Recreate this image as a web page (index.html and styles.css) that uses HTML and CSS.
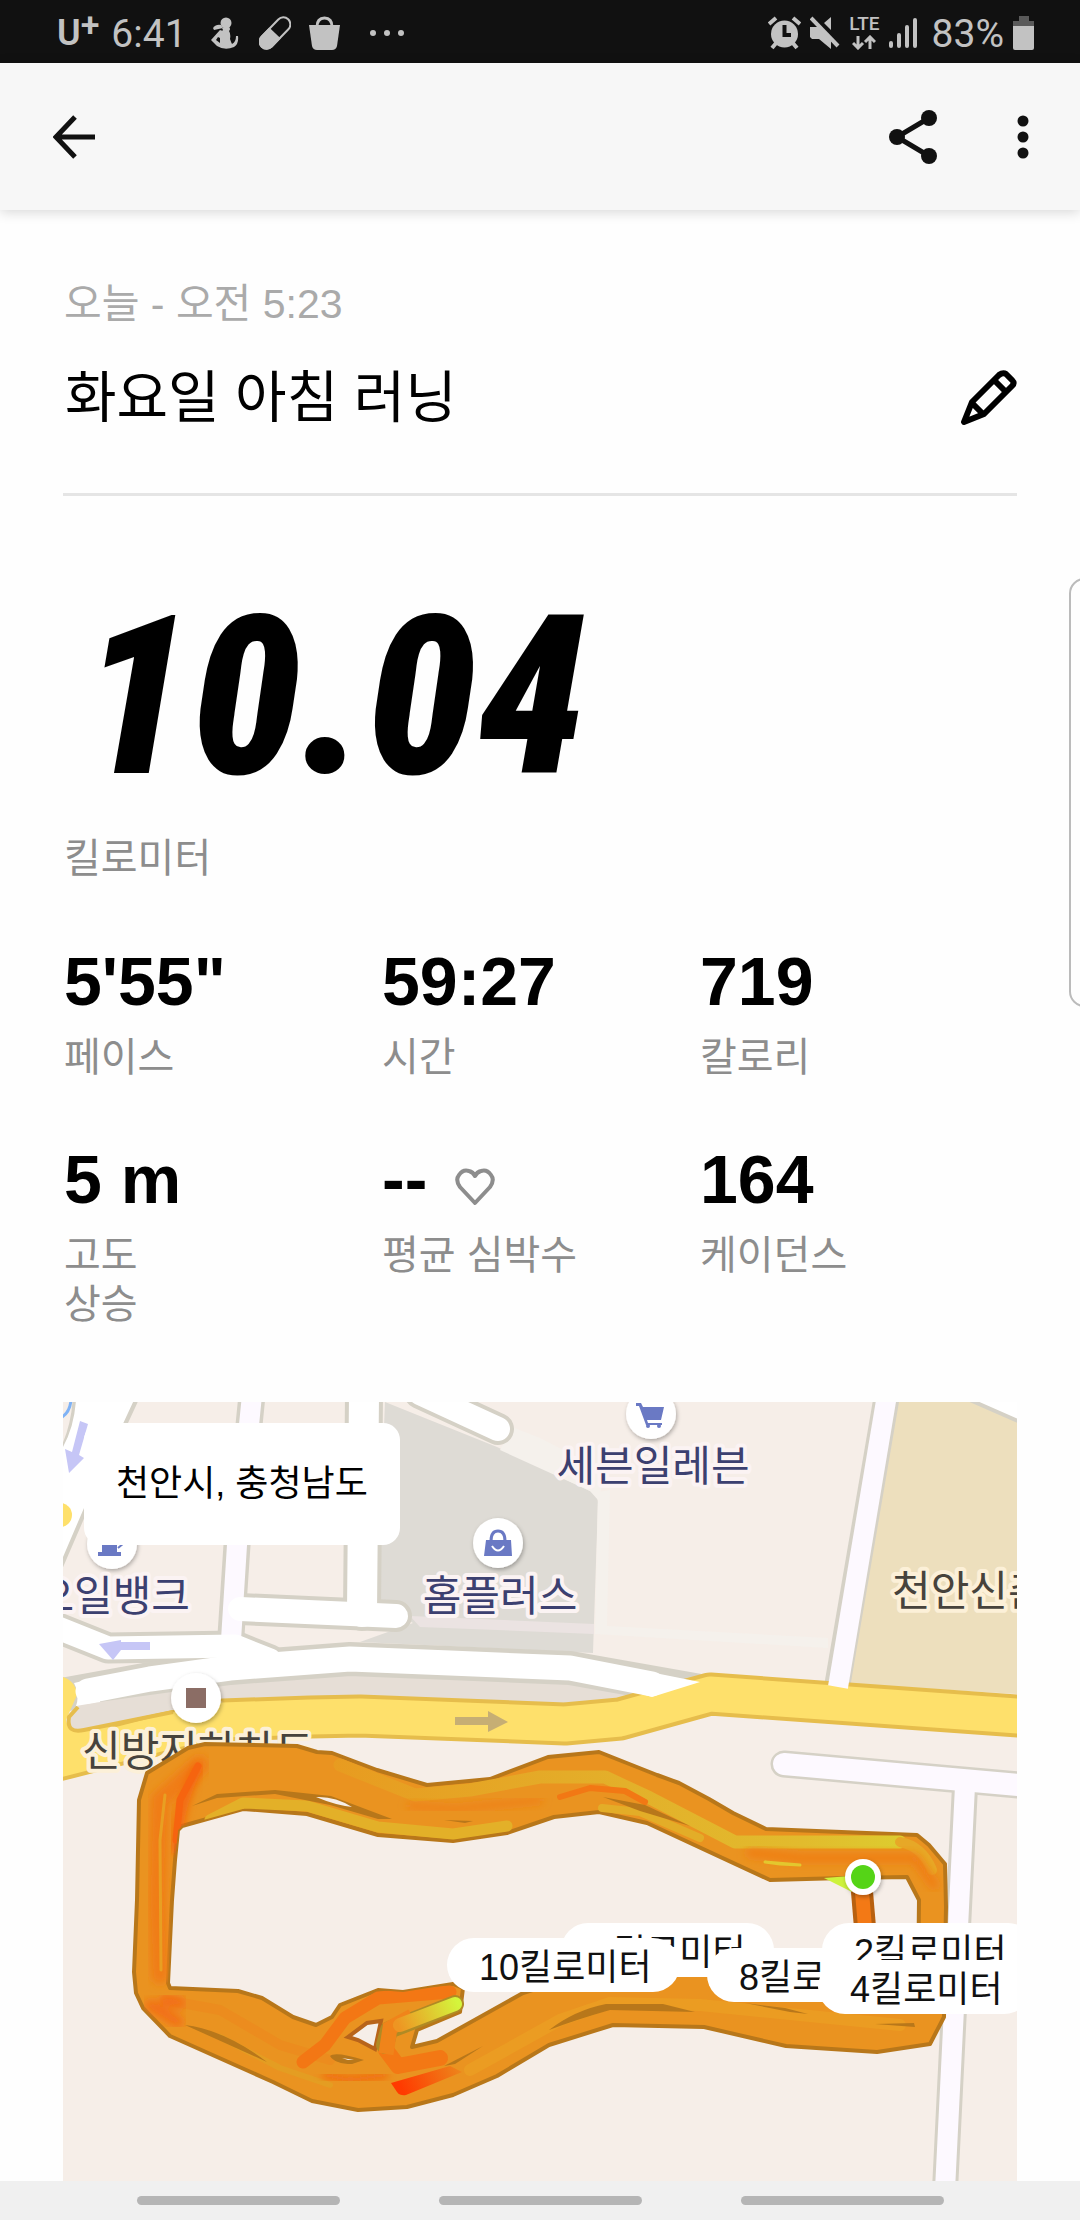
FILE: index.html
```html
<!DOCTYPE html>
<html lang="ko">
<head>
<meta charset="utf-8">
<meta name="viewport" content="width=device-width, initial-scale=1">
<title>화요일 아침 러닝</title>
<link rel="stylesheet" href="styles.css">
</head>
<body>
<div class="status">
  <div class="status-left">
    <span class="carrier">U<sup>+</sup></span>
    <span class="clock">6:41</span>
    <svg class="ic-run" width="28" height="34" viewBox="0 0 28 34" fill="#c2c2c2"><circle cx="15" cy="7" r="5.500"/><path d="M11 12L18 11Q20 13 18 15Q20 18 19 23Q20 26 21 28Q25 26 25 20L27 20Q28 28 23 31Q14 35 6 30L0 24L9 14Q12 15 12 14ZM7 21L5 24L9 27L9 22Z" fill-rule="evenodd"/><path d="M2 12Q5 8 10 9L12 12L3 14Z"/></svg>
    <svg class="ic-pill" width="32" height="34" viewBox="0 0 32 34"><g transform="rotate(-46 16 17)"><rect x="-3" y="10" width="38" height="14" rx="7" fill="none" stroke="#c2c2c2" stroke-width="2"/><path d="M16 9H4A8 8 0 0 0 4 25H16Z" fill="#c2c2c2"/></g></svg>
    <svg class="ic-bag" width="32" height="34" viewBox="0 0 32 34"><path d="M0 9H31L28 30Q27 34 23 34H8Q4 34 3 30Z" fill="#c2c2c2"/><path d="M8 11Q8 2 15.500 2Q23 2 23 11" fill="none" stroke="#c2c2c2" stroke-width="3"/></svg>
    <svg width="36" height="8" viewBox="0 0 36 8" fill="#c2c2c2"><circle cx="4" cy="4" r="3"/><circle cx="18" cy="4" r="3"/><circle cx="32" cy="4" r="3"/></svg>
  </div>
  <div class="status-right">
    <svg width="33" height="34" viewBox="0 0 33 34"><g stroke="#c2c2c2" stroke-width="4"><path d="M1 8L8 2M25 2L32 8M4 32L9 26M29 32L24 26"/></g><circle cx="16.500" cy="18" r="13.500" fill="#c2c2c2"/><path d="M16.500 9V19H23" fill="none" stroke="#111" stroke-width="4"/></svg>
    <svg width="30" height="34" viewBox="0 0 30 34" fill="#c2c2c2"><path d="M0 11H9L21 23V33L9 23H2L0 21ZM21 1V14L14 7Z"/><path d="M1 2L28 30" stroke="#c2c2c2" stroke-width="4"/></svg>
    <div class="lte"><span>LTE</span><svg width="24" height="15" viewBox="0 0 24 15" fill="none" stroke="#c2c2c2" stroke-width="3"><path d="M6 1V13M1 8L6 13L11 8M18 14V2M13 7L18 2L23 7"/></svg></div>
    <svg width="28" height="32" viewBox="0 0 28 32" stroke="#c2c2c2" stroke-width="4" stroke-linecap="round"><path d="M2 26V29M10 18V29M18 10V29M26 3V29"/></svg>
    <span class="percent">83%</span>
    <svg width="22" height="34" viewBox="0 0 22 34"><path d="M6 0H16V5H21V10H0V5H6Z" fill="#5a5a5a"/><path d="M0 10H21V32Q21 34 19 34H2Q0 34 0 32Z" fill="#c2c2c2"/></svg>
  </div>
</div>

<header class="appbar">
  <button class="icon-btn" aria-label="뒤로"><svg width="42" height="44" viewBox="0 0 42 44" fill="none" stroke="#111" stroke-width="5"><path d="M42 22H4M22 2L3 22L22 42"/></svg></button>
  <div class="actions">
    <button class="icon-btn" aria-label="공유"><svg width="48" height="54" viewBox="0 0 48 54"><path d="M40 8L8 27L40 46" fill="none" stroke="#111" stroke-width="5"/><g fill="#111"><circle cx="40" cy="8" r="8"/><circle cx="8" cy="27" r="8"/><circle cx="40" cy="46" r="8"/></g></svg></button>
    <button class="icon-btn" aria-label="더보기"><svg width="12" height="44" viewBox="0 0 12 44" fill="#111"><circle cx="6" cy="6" r="5.500"/><circle cx="6" cy="22" r="5.500"/><circle cx="6" cy="38" r="5.500"/></svg></button>
  </div>
</header>

<main class="run">
  <section class="heading">
    <p class="date">오늘 - 오전 5:23</p>
    <div class="title-row">
      <h1>화요일 아침 러닝</h1>
      <button class="icon-btn" aria-label="제목 편집"><svg width="56" height="56" viewBox="0 0 56 56" fill="none" stroke="#000" stroke-width="6" stroke-linejoin="round"><path d="M3 52L11 32L38 5Q42 2 45 4L51 10Q54 13 51 16L23 44Z"/><path d="M33 10L45 22M11 33L22 44"/></svg></button>
    </div>
  </section>

  <section class="distance">
    <p class="distance-value">10.04</p>
    <p class="label">킬로미터</p>
  </section>

  <section class="stats">
    <div class="stat"><p class="value">5'55"</p><p class="label">페이스</p></div>
    <div class="stat"><p class="value">59:27</p><p class="label">시간</p></div>
    <div class="stat"><p class="value">719</p><p class="label">칼로리</p></div>
    <div class="stat"><p class="value">5 m</p><p class="label">고도<br>상승</p></div>
    <div class="stat"><p class="value">-- <svg class="heart" width="40" height="38" viewBox="0 0 40 38" fill="none" stroke="#8d8d8d" stroke-width="4" stroke-linejoin="round"><path d="M20 35L5 19Q0 12 4 7Q8 1 14 3Q18 4 20 8Q22 4 26 3Q32 1 36 7Q40 12 35 19Z"/></svg></p><p class="label">평균 심박수</p></div>
    <div class="stat"><p class="value">164</p><p class="label">케이던스</p></div>
  </section>

  <section class="map">
    <svg class="map-art" viewBox="63 1402 954 779" preserveAspectRatio="xMinYMin slice">
      <defs>
        <filter id="soft" x="-20%" y="-20%" width="140%" height="140%"><feGaussianBlur stdDeviation="4"/></filter>
        <filter id="drop" x="-50%" y="-50%" width="200%" height="200%"><feDropShadow dx="1" dy="2" stdDeviation="2" flood-opacity=".3"/></filter>
        <linearGradient id="lime" gradientUnits="userSpaceOnUse" x1="400" y1="2030" x2="458" y2="2003"><stop offset="0" stop-color="#ee9522"/><stop offset="1" stop-color="#d4f53c"/></linearGradient>
        <linearGradient id="red" gradientUnits="userSpaceOnUse" x1="402" y1="2090" x2="470" y2="2062"><stop offset="0" stop-color="#ff3a00"/><stop offset="1" stop-color="#ea9320"/></linearGradient>
        <linearGradient id="amber" gradientUnits="userSpaceOnUse" x1="330" y1="0" x2="920" y2="0"><stop offset="0" stop-color="#e89b20"/><stop offset=".5" stop-color="#e3b02a"/><stop offset=".8" stop-color="#e2bb2d"/><stop offset="1" stop-color="#dccf2f"/></linearGradient>
        <clipPath id="band"><use href="#outer" clip-rule="evenodd"/></clipPath>
      </defs>
      <rect x="63" y="1402" width="954" height="779" fill="#f6eee8"/>

      <!-- blocks -->
      <path d="M385 1402L497 1447L590 1491Q598 1494 598 1502L593 1653L360 1642L413 1623L377 1603Z" fill="#dedbd5"/>
      <path d="M512 1427L540 1438L606 1472L598 1500L590 1491L500 1450Z" fill="#f5f1ec"/>
      <path d="M598 1492L610 1490L607 1626L828 1638V1648L595 1634Z" fill="#f5f1ec"/>
      <path d="M410 1616L594 1624V1634L420 1627Z" fill="#ebe3e2"/>
      <path d="M898 1402H1017V1694L848 1684Z" fill="#eddfbd"/>
      <path d="M970 1400L1020 1422V1400Z" fill="#fff" stroke="#d5d1c6" stroke-width="4"/>
      <path d="M77 1705L220 1682L353 1673L560 1682L640 1695L652 1700L573 1712L353 1702L223 1712L77 1735Q62 1730 70 1715Z" fill="#e6ded6"/>

      <!-- street casings -->
      <g fill="none" stroke="#d5d1c6" stroke-linejoin="round" stroke-linecap="round">
        <path d="M252 1395L237 1545L231 1635" stroke-width="27" stroke-linecap="butt"/>
        <path d="M364 1395L362 1612" stroke-width="38"/>
        <path d="M240 1609L396 1616" stroke-width="32"/>
        <path d="M420 1393L498 1429" stroke-width="32"/>
        <path d="M48 1624L108 1648L235 1646L270 1660" stroke-width="31"/>
        <path d="M62 1695L150 1679L230 1668L350 1659L450 1663L570 1668L700 1691" stroke-width="34"/>
        <path d="M887 1395L837 1687" stroke-width="26" stroke-linecap="butt"/>
        <path d="M784 1764L1030 1786" stroke-width="27"/>
        <path d="M965 1786L945 2190" stroke-width="26"/>
        <path d="M135 1402L85 1510L60 1568M75 1402Q73 1430 60 1455" stroke-width="5"/>
      </g>
      <path d="M76 1400H134L84 1508L60 1564V1452Q74 1430 76 1400Z" fill="#fff"/>

      <!-- main road -->
      <g fill="none" stroke-linejoin="round">
        <path d="M50 1762L175 1730L223 1720L310 1717L360 1716L565 1724L620 1719L710 1694L1030 1717" stroke="#e6bd4c" stroke-width="43"/>
        <path d="M50 1762L175 1730L223 1720L310 1717L360 1716L565 1724L620 1719L710 1694L1030 1717" stroke="#fee06b" stroke-width="35"/>
      </g>
      <path d="M60 1676Q76 1680 77 1695L66 1720Q68 1733 84 1730L110 1725L100 1760L60 1772Z" fill="#fee06b"/>
      <path d="M77 1705L69 1718Q66 1733 82 1730L173 1710L223 1702L172 1692Z" fill="#e6ded6"/>
      <path d="M78 1707L69 1717Q66 1734 84 1730L173 1712" fill="none" stroke="#e6bd4c" stroke-width="4"/>

      <g fill="none" stroke="#fff" stroke-linejoin="round" stroke-linecap="round">
        <path d="M252 1395L237 1545L231 1640" stroke="#fdf9ff" stroke-width="20"/>
        <path d="M364 1395L362 1612" stroke-width="30"/>
        <path d="M240 1609L396 1616" stroke-width="24"/>
        <path d="M420 1393L498 1429" stroke-width="24"/>
        <path d="M48 1624L108 1648L235 1646L270 1660" stroke-width="23"/>
        <path d="M88 1691L150 1679L230 1668L350 1659L450 1663L570 1668L652 1684" stroke-width="25"/>
        <path d="M887 1395L838 1687" stroke="#fdf9ff" stroke-width="20" stroke-linecap="butt"/>
        <path d="M784 1764L1030 1786" stroke="#fdf9ff" stroke-width="22"/>
        <path d="M965 1786L945 2190" stroke="#fdf9ff" stroke-width="20"/>
      </g>
      <path d="M640 1670L700 1682L652 1697L635 1692ZM100 1677L74 1683Q80 1695 76 1706L100 1702Z" fill="#fff"/>
      <circle cx="60" cy="1515" r="12" fill="#fee06b"/>
      <path d="M62 1417Q70 1412 71 1400" fill="none" stroke="#7fb2f5" stroke-width="3"/>

      <!-- direction arrows -->
      <path d="M80 1421L88 1424L79 1455L84 1458L69 1473L65 1449L72 1452Z" fill="#c6c6f6"/>
      <path d="M150 1642V1650H121L113 1660L99 1644L121 1640V1642Z" fill="#c6c6f6"/>
      <path d="M455 1717H488V1711L508 1722L488 1732V1725H455Z" fill="#c6ae74"/>

      <!-- places -->
      <g fill="#fff" filter="url(#drop)"><circle cx="651" cy="1414" r="25"/><circle cx="498" cy="1543" r="25"/><circle cx="112" cy="1544" r="25"/><circle cx="196" cy="1698" r="25"/></g>
      <g fill="#6a79c4">
        <path d="M636 1403H641L643 1407H664L661 1420H647L648 1423H662V1425H646L639 1406H636Z"/><circle cx="648" cy="1426" r="2"/><circle cx="659" cy="1426" r="2"/>
        <path d="M486 1540H511L512 1556H484Z"/><path d="M491 1541Q491 1531 498 1531Q505 1531 505 1541" fill="none" stroke="#6a79c4" stroke-width="3"/><path d="M492 1546Q498 1555 504 1546" fill="none" stroke="#fff" stroke-width="2"/>
        <path d="M102 1530H117V1552H121V1556H98V1552H102Z"/><path d="M118 1548L124 1543V1535" fill="none" stroke="#6a79c4" stroke-width="2"/>
      </g>
      <rect x="186" y="1688" width="20" height="20" fill="#8b6d65"/>
      <g class="place">
        <text x="653" y="1481" text-anchor="middle">세븐일레븐</text>
        <text x="500" y="1611" text-anchor="middle">홈플러스</text>
        <text x="190" y="1611" text-anchor="end">오일뱅크</text>
        <g class="place-dark"><text x="82" y="1766">신방지하차도</text><text x="892" y="1606">천안신촌</text></g>
      </g>

      <!-- run track -->
      <path id="outer" fill-rule="evenodd" fill="#ea9320" stroke="#b8771a" stroke-width="4" stroke-linejoin="round" d="M147 1773L188 1748L205 1744L297 1746L317 1752L332 1753L377 1770L427 1785L490 1779L548 1757L599 1752L657 1775L679 1783L709 1799L733 1813L766 1829L917 1835L929 1845L945 1864L946 1907L944 2017L930 2044L877 2052L786 2046L704 2027L613 2025L549 2045L497 2076L453 2095L407 2107L358 2110L312 2101L273 2082L170 2036L143 2008L136 1993L134 1972L137 1900L139 1800ZM182 1826L243 1809L307 1814L378 1835L453 1841L507 1833L554 1817L599 1812L647 1823L770 1880L843 1878L907 1877L919 1900L918 1990L800 1985L680 1970L580 1975L523 1993L437 2041L412 2047L417 2030L460 2012L463 1988L453 1984L403 1992L378 1990L340 2005L332 2017L316 2025L293 2017L262 1998L238 1991L170 1988L168 1983L172 1900L175 1860L178 1830Z"/>
      <g clip-path="url(#band)" fill="none" stroke-linejoin="round" stroke-linecap="round">
        <path d="M160 1975L157 1900L160 1800L200 1765" stroke="#f07d18" stroke-width="18" filter="url(#soft)"/>
        <path d="M340 1765L415 1795L470 1790L540 1777L605 1777L650 1798L735 1842L765 1842L900 1842" stroke="url(#amber)" stroke-width="13"/>
        <path d="M900 1842Q922 1846 932 1870" stroke="#e7a827" stroke-width="10"/>
        <path d="M210 1820L243 1803L307 1806L378 1827L453 1834L507 1826" stroke="#e3b028" stroke-width="11"/>
        <path d="M602 1808L640 1812L700 1838" stroke="#e3ad28" stroke-width="8"/>
        <path d="M161 1970L160 1840L165 1795" stroke="#e89f22" stroke-width="3"/>
        <path d="M176 1850Q180 1800 198 1768" stroke="#f6610d" stroke-width="9" filter="url(#soft)"/>
        <path d="M198 1766L180 1800L176 1840" stroke="#f6640f" stroke-width="7"/>
        <path d="M410 1806L455 1809L540 1800" stroke="#f07d16" stroke-width="6" filter="url(#soft)"/>
        <path d="M560 1797L590 1788L625 1791L645 1802" stroke="#f27814" stroke-width="6"/>
        <path d="M750 1853L800 1858L915 1858L934 1885" stroke="#f07d16" stroke-width="9" filter="url(#soft)"/>
        <path d="M930 1870V1920" stroke="#f07d16" stroke-width="10" filter="url(#soft)"/>
        <path d="M765 1862L800 1865L780 1864Z" stroke="#e3c72e" stroke-width="3"/>
        <path d="M165 2000L220 2010L280 2045L330 2060" stroke="#ec8c1e" stroke-width="10"/>
        <path d="M220 2037L280 2068L330 2085" stroke="#e49d22" stroke-width="6"/>
        <path d="M165 2000L180 2003M150 2005L178 2022" stroke="#f36d12" stroke-width="11" filter="url(#soft)"/>
        <path d="M470 2070L560 2020L610 2003L700 2005L900 2025" stroke="#eb9c22" stroke-width="12"/>
        <path d="M303 2062L325 2045L345 2018L378 1998L450 1992" stroke="#f37714" stroke-width="13"/>
        <path d="M325 2075L350 2080L385 2075" stroke="#f4600e" stroke-width="6" filter="url(#soft)"/>
        <path d="M386 2050L398 2066L440 2058" stroke="#f37814" stroke-width="16"/>
      </g>
      <g fill="#b8771a">
        <path d="M192 1806L217 1794L275 1790L331 1796L392 1819L378 1819L330 1805L275 1794L217 1798Z"/>
        <path d="M185 2025Q225 2030 267 2062L225 2043Z"/>
        <path d="M444 1820L473 1821L465 1823Z"/><path d="M603 1797L645 1805L690 1826L640 1811Z"/>
        <path d="M549 2030Q575 2010 606 2004H663L695 2012L610 2010Q575 2020 549 2030Z"/>
        <path d="M745 2003L785 2008L808 2014L790 2012Z"/><path d="M875 2024L914 2023L915 2027Z"/>
        <path d="M444 2066L483 2046L455 2064Z"/>
        <path d="M330 2056Q335 2051 364 2060L352 2064Q335 2064 330 2056Z"/>
      </g>
      <path d="M342 2058L354 2060L348 2060ZM316 1797Q335 1796 352 1807Q335 1805 316 1797Z" fill="#f6eee8"/>
      <path d="M348 2037L367 2023L381 2021L375 2049L358 2040Z" fill="#f6eee8" stroke="#b8641a" stroke-width="4"/>
      <path d="M385 2045L389 2030L455 2004" fill="none" stroke="#b08a24" stroke-width="18" stroke-linecap="round" stroke-linejoin="round"/>
      <path d="M386 2054L390 2028L412 2016" fill="none" stroke="#f0841a" stroke-width="15"/>
      <path d="M400 2025L455 2004" fill="none" stroke="url(#lime)" stroke-width="14" stroke-linecap="round"/>
      <path d="M391 2083L450 2066L462 2072L406 2095Q400 2096 397 2092Z" fill="url(#red)"/>
      <path d="M861 1880L869 1975" stroke="#b8600f" stroke-width="22"/><path d="M861 1880L869 1975" stroke="#f37915" stroke-width="14"/>
      <path d="M824 1878L850 1876L852 1892Z" fill="#cdf23c"/>
      <circle cx="863" cy="1877" r="18" fill="#fff" filter="url(#drop)"/><circle cx="863" cy="1877" r="12" fill="#55d417"/>
    </svg>
    <p class="location">천안시, 충청남도</p>
    <ul class="markers">
      <li class="chip km6">6킬로미터</li>
      <li class="chip km10">10킬로미터</li>
      <li class="chip km8">8킬로미터</li>
      <li class="chip km2">2킬로미터</li>
      <li class="chip km4">4킬로미터</li>
    </ul>
  </section>
</main>

<nav class="gestures"><span></span><span></span><span></span></nav>
<div class="edge-panel"></div>
</body>
</html>
```
FILE: styles.css
```css
* { box-sizing: border-box; }
body {
  margin: 0;
  min-height: 100vh;
  display: flex;
  flex-direction: column;
  position: relative;
  overflow-x: hidden;
  background: #fefefe;
  color: #000;
  font-family: "Liberation Sans", "Noto Sans CJK KR", sans-serif;
}
p, h1, ul { margin: 0; padding: 0; }
svg { display: block; flex: none; }
button { border: 0; padding: 0; background: none; cursor: pointer; }

.status {
  height: 63px;
  padding: 2px 45px 0 57px;
  display: flex;
  justify-content: space-between;
  background: #111;
  color: #c2c2c2;
  font-family: Roboto, sans-serif;
  font-size: 39px;
}
.status-left, .status-right { display: flex; align-items: center; }
.carrier { font-size: 36px; font-weight: 600; line-height: 40px; margin-right: 12px; }
.carrier sup { font-size: 34px; line-height: 20px; vertical-align: 9px; }
.clock, .percent { padding-top: 3px; }
.ic-run { margin-left: 24px; }
.ic-pill { margin-left: 20px; }
.ic-bag { margin: 0 28px 0 18px; }
.status-right { gap: 9px; }
.lte { display: flex; flex-direction: column; align-items: center; gap: 4px; font-size: 19px; line-height: 15px; font-weight: 500; }
.percent { margin-left: 6px; }

.appbar {
  height: 147px;
  padding: 0 51px 0 53px;
  display: flex;
  align-items: center;
  justify-content: space-between;
  background: #f7f7f7;
  box-shadow: 0 2px 12px rgba(0, 0, 0, .16);
}
.actions { display: flex; align-items: center; gap: 80px; }

.run { flex: 1; display: flex; flex-direction: column; padding: 68px 63px 0; }
.heading { border-bottom: 3px solid #e5e5e5; padding-bottom: 54px; }
.date { padding-left: 1px; font-size: 41px; line-height: 52px; color: #aaa; }
.title-row { display: flex; align-items: center; justify-content: space-between; margin-top: 26px; }
h1 { padding-left: 2px; font-size: 56px; line-height: 83px; font-weight: 400; }

.distance { padding-top: 90px; }
.distance-value {
  padding-left: 18px;
  font: italic 900 222px/222px "Roboto Condensed", Roboto, sans-serif;
}
.label { font-size: 40px; line-height: 49px; color: #8d8d8d; }
.distance .label { margin-top: 26px; padding-left: 1px; }

.stats { display: grid; grid-template-columns: repeat(3, 1fr); gap: 57px 0; padding-top: 58px; }
.stat { padding-left: 1px; }
.value { display: flex; align-items: center; gap: 22px; font-size: 68px; line-height: 80px; font-weight: 700; }
.heart { margin: 16px 0 0 6px; }
.stat .label { margin-top: 12px; }

.map { flex: 1; position: relative; min-height: 700px; margin-top: 73px; overflow: hidden; }
.map-art { position: absolute; inset: 0; width: 100%; height: 100%; }
.place { font: 400 42px "Noto Sans CJK KR", sans-serif; fill: #3c4070; stroke: #fbf3f3; stroke-width: 8px; stroke-linejoin: round; paint-order: stroke; }
.place-dark { fill: #47433c; stroke: #fcf0d8; }
.location {
  position: absolute;
  left: 21px;
  top: 21px;
  padding: 34px 32px;
  border-radius: 17px;
  background: #fff;
  font-size: 36px;
  line-height: 54px;
}
.markers { list-style: none; }
.chip {
  position: absolute;
  padding: 6px 28px 0 32px;
  border-radius: 27px;
  background: #fff;
  color: #111;
  font-size: 36px;
  line-height: 48px;
  white-space: nowrap;
}
.km6 { left: 498px; top: 521px; }
.km10 { left: 384px; top: 536px; }
.km8 { left: 644px; top: 546px; }
.km2 { left: 759px; top: 521px; }
.km4 { left: 755px; top: 558px; }

.gestures { height: 39px; display: flex; justify-content: center; align-items: center; gap: 99px; background: #f0f0f0; }
.gestures span { width: 203px; height: 9px; border-radius: 5px; background: #b5b5b5; }

.edge-panel {
  position: absolute;
  right: -20px;
  top: 578px;
  width: 31px;
  height: 429px;
  border: 2px solid #bbb;
  border-radius: 16px;
  background: #fefefe;
}
```
